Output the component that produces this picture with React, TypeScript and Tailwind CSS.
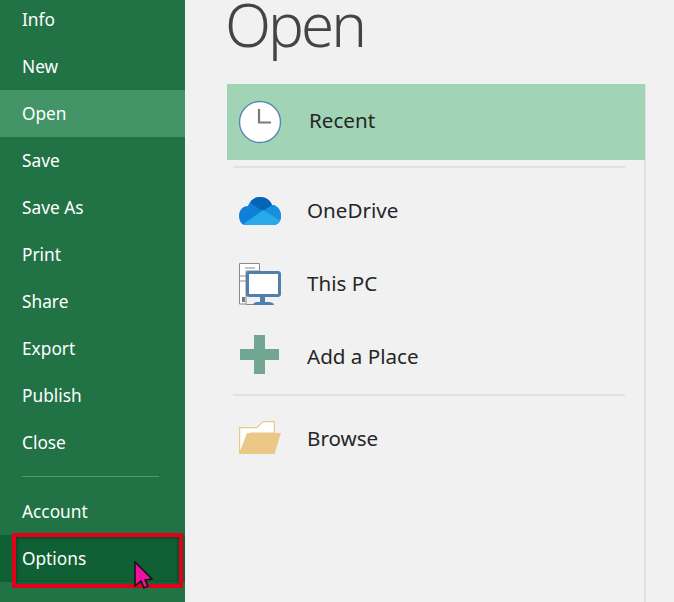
import React from "react";

const topItems = ["Info", "New", "Open", "Save", "Save As", "Print", "Share", "Export", "Publish", "Close"];

const ClockIcon = () => (
  <svg width="44" height="44" viewBox="0 0 44 44">
    <circle cx="22" cy="22" r="20.5" fill="#fff" stroke="#5b87b8" strokeWidth="1.4" />
    <path d="M21 9 V22.5 H33" fill="none" stroke="#7a7a7a" strokeWidth="2.2" />
  </svg>
);

const CloudIcon = () => (
  <svg width="42" height="28" viewBox="0 0 42 28">
    <defs>
      <clipPath id="cloud">
        <path d="M7 28 C2 28 0 23 0 19 C0 13 4 9 9 9 C11 3 16 0 21 0 C27 0 31 3 33 8 C38 8 42 13 42 19 C42 24 39 28 35 28 Z" />
      </clipPath>
    </defs>
    <g clipPath="url(#cloud)">
      <rect width="42" height="28" fill="#0f7fd8" />
      <path d="M8 0 H36 V11 L24 14 L14 8 Z" fill="#0364b8" />
      <path d="M24 14 L33 8 H42 V24 Z" fill="#1490df" />
      <path d="M3 28 L24 13 L42 24 V28 Z" fill="#29a8ea" />
    </g>
  </svg>
);

const PcIcon = () => (
  <svg width="42" height="42" viewBox="0 0 42 42">
    <path d="M0.5 0.5 H20.5 V8 H7 V41 H0.5 Z" fill="#fff" stroke="#8a8a8a" strokeWidth="1" />
    <path d="M6 5 H16 M1 13 H7 M1 18 H7" stroke="#8a8a8a" strokeWidth="1" />
    <rect x="3" y="34" width="3" height="5" fill="#7a7a7a" />
    <path d="M7 41.5 H14" stroke="#8a8a8a" strokeWidth="1" />
    <rect x="8.5" y="9.5" width="32" height="23" rx="1.5" fill="#fff" stroke="#4f7fad" strokeWidth="3" />
    <rect x="21" y="34" width="5" height="5" fill="#4f7fad" />
    <path d="M14 42 C14 40 16 39 19 39 H29 C32 39 35 40 35 42 Z" fill="#4f7fad" />
  </svg>
);

const PlusIcon = () => (
  <svg width="40" height="40" viewBox="0 0 40 40">
    <path d="M14 0 H25 V14 H39 V25 H25 V39 H14 V25 H0 V14 H14 Z" fill="#71a692" />
  </svg>
);

const FolderIcon = () => (
  <svg width="42" height="33" viewBox="0 0 42 33">
    <path d="M0.6 32 V6.6 H18 L24 0.6 H35.4 V12 H12 Z" fill="#fff" stroke="#ecc888" strokeWidth="1.2" />
    <path d="M0 33 L8 12 H42 L35.5 33 Z" fill="#ecc888" />
  </svg>
);

const places = [
  { label: "OneDrive", icon: <CloudIcon />, pad: "pl-[12px]" },
  { label: "This PC", icon: <PcIcon />, pad: "pl-[12px]" },
  { label: "Add a Place", icon: <PlusIcon />, pad: "pl-[13px] -mt-[4px]" },
];

export default function App() {
  return (
    <div className="relative flex h-[602px] w-[674px] overflow-hidden bg-[#f1f1f1] font-['Noto_Sans',sans-serif]">
      <aside className="flex h-full w-[185px] shrink-0 flex-col bg-[#217346] text-[17.3px] text-white">
        <div className="-mt-1 flex flex-col">
          {topItems.map((item) => (
            <div
              key={item}
              className={`flex h-[47px] items-center pl-[22px] ${item === "Open" ? "bg-[#439467]" : ""}`}
            >
              {item}
            </div>
          ))}
        </div>
        <div className="ml-[22px] mt-[10px] h-px w-[137px] bg-[#4d9a70]" />
        <div className="mt-[11px] flex h-[47px] items-center pl-[22px]">Account</div>
        <div className="flex h-[47px] items-center bg-[#0f6035] pl-[22px]">Options</div>
      </aside>

      <main className="flex-1 pl-[42px]">
        <div className="h-[84px]">
          <h1 className="-ml-[2px] text-[60px] font-light leading-[48px] tracking-[-3px] text-[#444444]">Open</h1>
        </div>
        <div className="flex h-full w-[419px] flex-col border-r-2 border-[#e1e1e1]">
          <div className="flex h-[76px] w-[418px] items-center bg-[#a0d4b5] pl-[11px] text-[20.6px] text-[#262626]">
            <ClockIcon />
            <span className="-mt-[3px] ml-[27px]">Recent</span>
          </div>
          <div className="ml-[6px] mt-[6px] h-[2px] w-[392px] bg-[#e1e1e1]" />
          <div className="mt-[6px] flex flex-col">
            {places.map((p) => (
              <div key={p.label} className="flex h-[73px] items-center text-[20.6px] text-[#262626]">
                <div className={`flex w-[80px] justify-start ${p.pad}`}>{p.icon}</div>
                <span>{p.label}</span>
              </div>
            ))}
          </div>
          <div className="ml-[6px] mt-[1px] h-[2px] w-[392px] bg-[#e1e1e1]" />
          <div className="mt-[6px] flex h-[73px] items-center text-[20.6px] text-[#262626]">
            <div className="-mt-[2px] flex w-[80px] pl-[12px]">
              <FolderIcon />
            </div>
            <span>Browse</span>
          </div>
        </div>
      </main>

      {/* annotation drawn over the screenshot */}
      <div className="absolute left-[12px] top-[533px] h-[55px] w-[171px] border-[4px] border-[#e2001a] shadow-[inset_0_0_4px_rgba(0,0,0,0.5)]" />
      <svg className="absolute left-[134px] top-[561px]" width="20" height="28" viewBox="0 0 20 28">
        <path d="M1 1 V25 L7 20 L10 27 L14 25 L11 19 L18 18 Z" fill="#f0109f" stroke="#111" strokeWidth="1.5" />
      </svg>
    </div>
  );
}
